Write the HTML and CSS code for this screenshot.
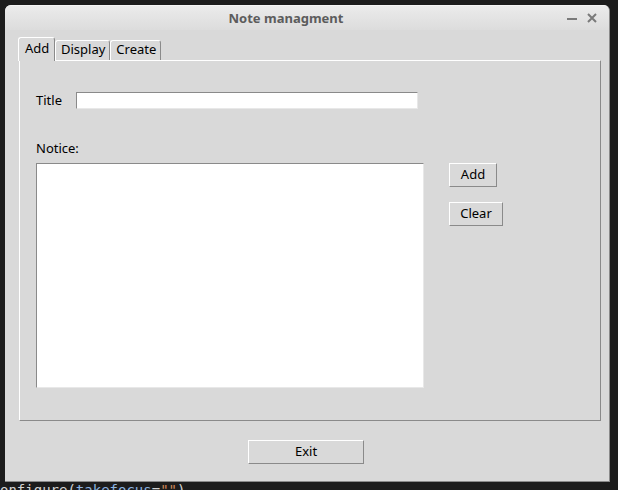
FILE: index.html
```html
<!DOCTYPE html>
<html>
<head>
<meta charset="utf-8">
<title>Note managment</title>
<link rel="stylesheet" href="styles.css">
</head>
<body>
<div class="window">
  <div class="titlebar">
    <span class="title">Note managment</span>
    <div class="controls">
      <svg class="ctl" width="12" height="12" viewBox="0 0 12 12"><rect x="1" y="6" width="10" height="2" fill="#7a7a7a"/></svg>
      <svg class="ctl" width="12" height="12" viewBox="0 0 12 12"><path d="M2 2 L10 10 M10 2 L2 10" stroke="#7a7a7a" stroke-width="2"/></svg>
    </div>
  </div>
  <div class="content">
    <div class="tabs">
      <div class="tab active">Add</div>
      <div class="tab">Display</div>
      <div class="tab">Create</div>
    </div>
    <div class="frame">
      <div class="title-row">
        <label class="lbl">Title</label>
        <div class="entry"></div>
      </div>
      <div class="lbl notice">Notice:</div>
      <div class="main-row">
        <div class="textarea"></div>
        <div class="side">
          <div class="btn btn-add">Add</div>
          <div class="btn btn-clear">Clear</div>
        </div>
      </div>
    </div>
    <div class="exit-row">
      <div class="btn btn-exit">Exit</div>
    </div>
  </div>
</div>
<div class="code"><span class="c1">onfigure(</span><span class="c2">takefocus</span><span class="c1">=</span><span class="c3">""</span><span class="c1">)</span></div>
</body>
</html>
```
FILE: styles.css
```css
html, body {
  margin: 0;
  padding: 0;
}
body {
  background: #1c1c1c;
  width: 618px;
  height: 490px;
  overflow: hidden;
  font-family: "Noto Sans", "DejaVu Sans", sans-serif;
  font-size: 13px;
  color: #000;
}
.window {
  margin: 5px 0 0 5px;
  width: 605px;
  height: 477px;
  box-sizing: border-box;
  background: #d9d9d9;
  border-radius: 6px 6px 0 0;
  border-right: 1px solid #8a8a8a;
  border-bottom: 1px solid #8a8a8a;
  display: flex;
  flex-direction: column;
  overflow: hidden;
}
.titlebar {
  height: 25px;
  flex: none;
  background: linear-gradient(#ebebeb, #dcdcdc);
  display: flex;
  align-items: center;
  justify-content: center;
  position: relative;
  border-top: 1px solid #f4f4f4;
  box-sizing: border-box;
}
.title {
  font-weight: bold;
  color: #5c5c5c;
  font-size: 13px;
  margin-left: -42px;
}
.controls {
  position: absolute;
  right: 11px;
  top: 6px;
  display: flex;
  gap: 8px;
}
.content {
  flex: 1;
  display: flex;
  flex-direction: column;
  padding: 7px 0 0 13px;
}
.tabs {
  display: flex;
  align-items: flex-end;
  height: 23px;
  position: relative;
  z-index: 1;
}
.tab {
  height: 20px;
  box-sizing: border-box;
  border-top: 1px solid #fff;
  border-left: 1px solid #fff;
  border-right: 1px solid #8a8a8a;
  border-radius: 3px 3px 0 0;
  padding: 0 4px 0 5px;
  line-height: 17px;
  background: #d9d9d9;
}
.tab.active {
  height: 24px;
  margin-bottom: -1px;
  line-height: 20px;
  padding: 0 5px 0 6px;
  width: 37px;
}
.frame {
  margin-left: 1px;
  width: 582px;
  height: 361px;
  box-sizing: border-box;
  border-top: 1px solid #fff;
  border-left: 1px solid #fff;
  border-right: 1px solid #8a8a8a;
  border-bottom: 1px solid #8a8a8a;
  padding: 31px 0 0 16px;
}
.title-row {
  display: flex;
  align-items: center;
  height: 17px;
}
.title-row .lbl {
  width: 40px;
  line-height: 15px;
}
.entry {
  width: 342px;
  height: 17px;
  box-sizing: border-box;
  background: #fff;
  border-top: 1px solid #8a8a8a;
  border-left: 1px solid #8a8a8a;
  border-right: 1px solid #e8e8e8;
  border-bottom: 1px solid #e8e8e8;
}
.notice {
  margin-top: 31px;
  height: 18px;
  line-height: 17px;
}
.main-row {
  margin-top: 5px;
  display: flex;
}
.textarea {
  width: 388px;
  height: 225px;
  box-sizing: border-box;
  background: #fff;
  border-top: 1px solid #8a8a8a;
  border-left: 1px solid #8a8a8a;
  border-right: 1px solid #e8e8e8;
  border-bottom: 1px solid #e8e8e8;
}
.side {
  margin-left: 25px;
  display: flex;
  flex-direction: column;
  align-items: flex-start;
  gap: 15px;
}
.btn {
  height: 24px;
  box-sizing: border-box;
  border-top: 1px solid #fff;
  border-left: 1px solid #fff;
  border-right: 1px solid #8a8a8a;
  border-bottom: 1px solid #8a8a8a;
  background: #d9d9d9;
  text-align: center;
  line-height: 21px;
}
.btn-add { width: 48px; }
.btn-clear { width: 54px; }
.exit-row {
  display: flex;
  padding-left: 230px;
  margin-top: 19px;
}
.btn-exit { width: 116px; }
.code {
  font-family: "DejaVu Sans Mono", monospace;
  font-size: 14px;
  line-height: 16px;
  margin-top: 0;
  white-space: pre;
}
.c1 { color: #d4d4d4; }
.c2 { color: #8cb4e0; }
.c3 { color: #d08a5a; }
```
